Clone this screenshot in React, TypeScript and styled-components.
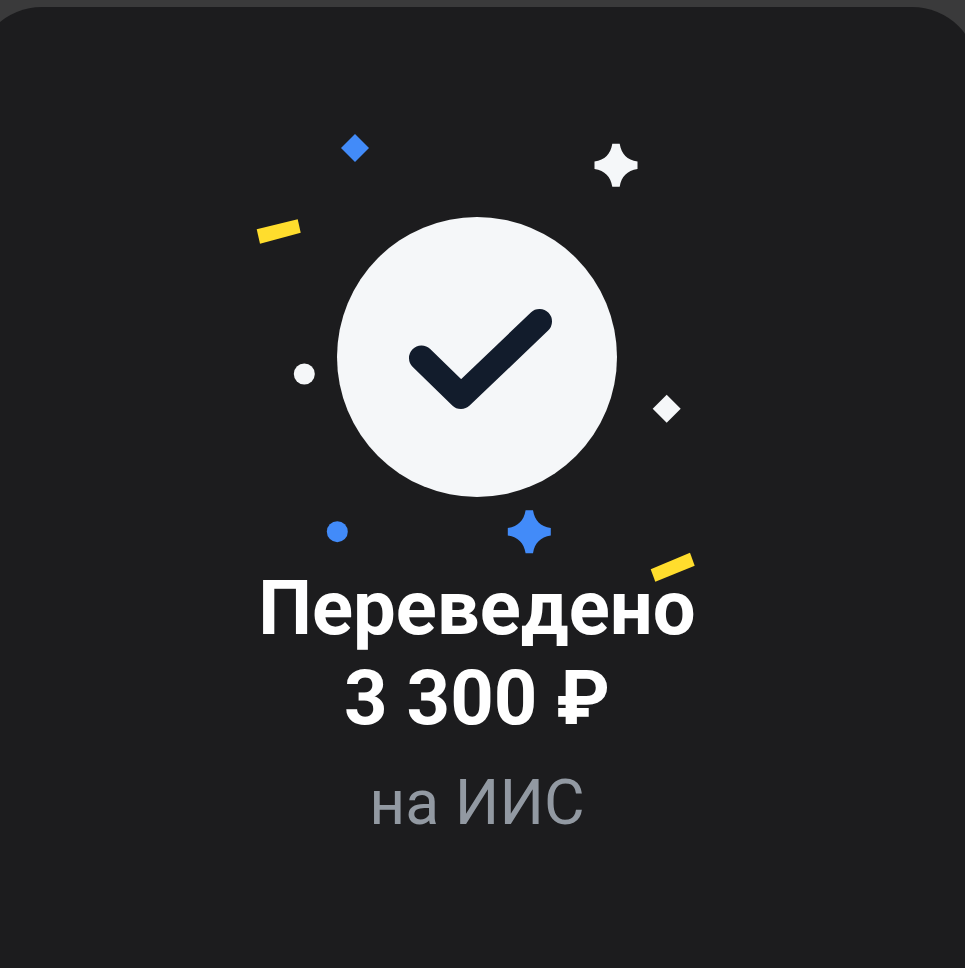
import styled, { createGlobalStyle } from 'styled-components';

const GlobalStyle = createGlobalStyle`
  html, body {
    margin: 0;
    padding: 0;
    background: #3a3a3b;
  }
`;

const Screen = styled.div`
  width: 965px;
  height: 968px;
  padding-top: 7px;
  box-sizing: border-box;
  overflow: hidden;
  background: #3a3a3b;
`;

// the sheet is wider than the screen, its corners get cut off at the edges
const Sheet = styled.main`
  width: 1002px;
  height: 961px;
  margin-left: -24px;
  padding-top: 110px;
  box-sizing: border-box;
  display: flex;
  flex-direction: column;
  align-items: center;
  background: #1c1c1e;
  border-radius: 66px 66px 0 0;
  font-family: Roboto, 'Noto Sans', sans-serif;
`;

const Illustration = styled.svg`
  display: block;
  flex: none;
  width: 480px;
  height: 446px;
  overflow: visible;
`;

const Title = styled.h1`
  margin: 0;
  color: #fff;
  font-size: 76px;
  font-weight: 700;
  line-height: 90px;
  text-align: center;
`;

const Subtitle = styled.p`
  margin: 24px 0 0;
  color: #9299a2;
  font-size: 62.5px;
  font-weight: 400;
  line-height: 72px;
  text-align: center;
`;

const BLUE = '#428bf9';
const YELLOW = '#ffdd2d';
const WHITE = '#f5f7f9';

const STAR =
  'M-3.7 -21.5 H3.7 C5.5 -11 11 -5.5 21.5 -3.7 V3.7 C11 5.5 5.5 11 3.7 21.5 H-3.7 C-5.5 11 -11 5.5 -21.5 3.7 V-3.7 C-11 -5.5 -5.5 -11 -3.7 -21.5 Z';

const Star = ({ x, y, fill }: { x: number; y: number; fill: string }) => (
  <path d={STAR} transform={`translate(${x} ${y})`} fill={fill} />
);

const Diamond = ({ x, y, fill }: { x: number; y: number; fill: string }) => (
  <path d="M0 -14 L14 0 L0 14 L-14 0 Z" transform={`translate(${x} ${y})`} fill={fill} />
);

export default function App() {
  return (
    <>
      <GlobalStyle />
      <Screen>
        <Sheet>
          <Illustration viewBox="0 0 480 446" aria-hidden="true">
            <Diamond x={118} y={31} fill={BLUE} />
            <polygon points="19.7,112.3 60.7,102.3 63.7,115.7 23,126.7" fill={YELLOW} />
            <Star x={379} y={48.3} fill={WHITE} />
            <circle cx={67.3} cy={257} r={10.5} fill={WHITE} />
            <circle cx={240} cy={240} r={140} fill={WHITE} />
            <path
              d="M184.5 241 L224 279.5 L302.5 204.5"
              fill="none"
              stroke="#121c2c"
              strokeWidth={25}
              strokeLinecap="round"
              strokeLinejoin="round"
            />
            <Diamond x={429.7} y={291.7} fill={WHITE} />
            <circle cx={100.3} cy={414.7} r={10.5} fill={BLUE} />
            <Star x={292.3} y={414.7} fill={BLUE} />
            <polygon points="413.7,452.3 453,435.7 457.7,448.7 418.3,464.7" fill={YELLOW} />
          </Illustration>
          <Title>
            Переведено
            <br />3 300 ₽
          </Title>
          <Subtitle>на ИИС</Subtitle>
        </Sheet>
      </Screen>
    </>
  );
}
